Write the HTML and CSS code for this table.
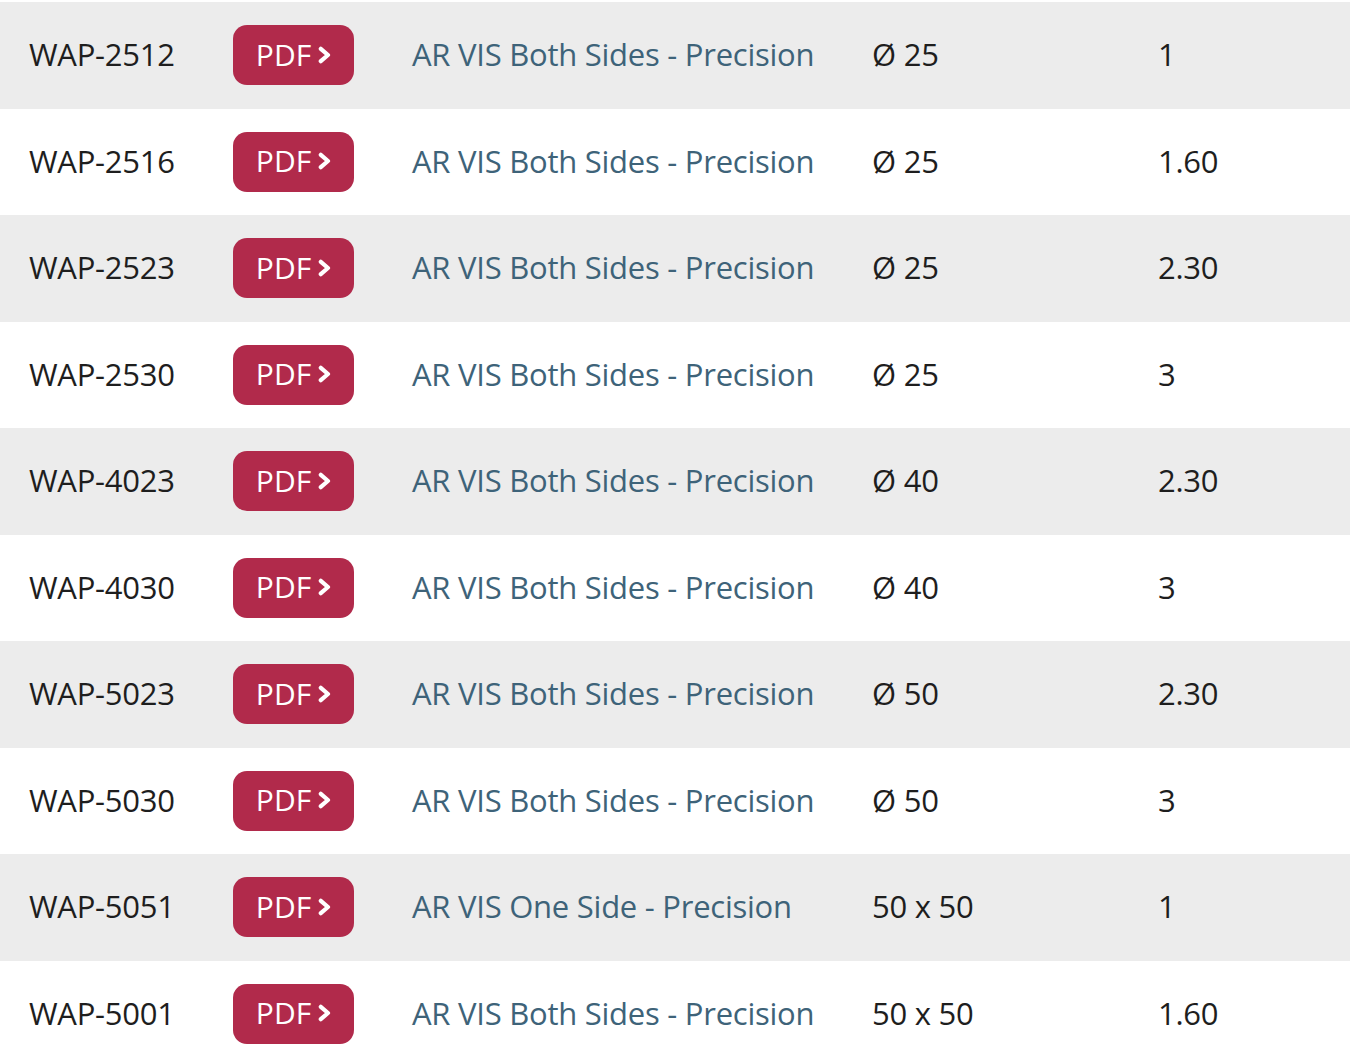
FILE: index.html
```html
<!DOCTYPE html>
<html>
<head>
<meta charset="utf-8">
<link rel="stylesheet" href="styles.css">
</head>
<body>
<div class="table">
  <div class="row alt"><span class="code">WAP-2512</span><span class="cell"><a class="pdf">PDF<svg class="chev" viewBox="0 0 13 18"><path d="M2.8 2.8 L10 9 L2.8 15.2"/></svg></a></span><span class="desc">AR VIS Both Sides - Precision</span><span class="size">Ø 25</span><span class="val">1</span></div>
  <div class="row"><span class="code">WAP-2516</span><span class="cell"><a class="pdf">PDF<svg class="chev" viewBox="0 0 13 18"><path d="M2.8 2.8 L10 9 L2.8 15.2"/></svg></a></span><span class="desc">AR VIS Both Sides - Precision</span><span class="size">Ø 25</span><span class="val">1.60</span></div>
  <div class="row alt"><span class="code">WAP-2523</span><span class="cell"><a class="pdf">PDF<svg class="chev" viewBox="0 0 13 18"><path d="M2.8 2.8 L10 9 L2.8 15.2"/></svg></a></span><span class="desc">AR VIS Both Sides - Precision</span><span class="size">Ø 25</span><span class="val">2.30</span></div>
  <div class="row"><span class="code">WAP-2530</span><span class="cell"><a class="pdf">PDF<svg class="chev" viewBox="0 0 13 18"><path d="M2.8 2.8 L10 9 L2.8 15.2"/></svg></a></span><span class="desc">AR VIS Both Sides - Precision</span><span class="size">Ø 25</span><span class="val">3</span></div>
  <div class="row alt"><span class="code">WAP-4023</span><span class="cell"><a class="pdf">PDF<svg class="chev" viewBox="0 0 13 18"><path d="M2.8 2.8 L10 9 L2.8 15.2"/></svg></a></span><span class="desc">AR VIS Both Sides - Precision</span><span class="size">Ø 40</span><span class="val">2.30</span></div>
  <div class="row"><span class="code">WAP-4030</span><span class="cell"><a class="pdf">PDF<svg class="chev" viewBox="0 0 13 18"><path d="M2.8 2.8 L10 9 L2.8 15.2"/></svg></a></span><span class="desc">AR VIS Both Sides - Precision</span><span class="size">Ø 40</span><span class="val">3</span></div>
  <div class="row alt"><span class="code">WAP-5023</span><span class="cell"><a class="pdf">PDF<svg class="chev" viewBox="0 0 13 18"><path d="M2.8 2.8 L10 9 L2.8 15.2"/></svg></a></span><span class="desc">AR VIS Both Sides - Precision</span><span class="size">Ø 50</span><span class="val">2.30</span></div>
  <div class="row"><span class="code">WAP-5030</span><span class="cell"><a class="pdf">PDF<svg class="chev" viewBox="0 0 13 18"><path d="M2.8 2.8 L10 9 L2.8 15.2"/></svg></a></span><span class="desc">AR VIS Both Sides - Precision</span><span class="size">Ø 50</span><span class="val">3</span></div>
  <div class="row alt"><span class="code">WAP-5051</span><span class="cell"><a class="pdf">PDF<svg class="chev" viewBox="0 0 13 18"><path d="M2.8 2.8 L10 9 L2.8 15.2"/></svg></a></span><span class="desc">AR VIS One Side - Precision</span><span class="size">50 x 50</span><span class="val">1</span></div>
  <div class="row"><span class="code">WAP-5001</span><span class="cell"><a class="pdf">PDF<svg class="chev" viewBox="0 0 13 18"><path d="M2.8 2.8 L10 9 L2.8 15.2"/></svg></a></span><span class="desc">AR VIS Both Sides - Precision</span><span class="size">50 x 50</span><span class="val">1.60</span></div>
</div>
</body>
</html>
```
FILE: styles.css
```css
html, body {
  margin: 0;
  padding: 0;
  background: #fff;
}
body {
  font-family: "Open Sans", "Noto Sans", sans-serif;
  font-size: 31px;
  letter-spacing: -0.25px;
  color: #1e1e1e;
  padding-top: 2px;
  overflow: hidden;
}
.table {
  display: flex;
  flex-direction: column;
}
.row {
  display: grid;
  grid-template-columns: 204px 179px 460px 286px 1fr;
  align-items: center;
  height: 106.5px;
  padding-left: 29px;
  padding-bottom: 2px;
  box-sizing: border-box;
}
.row.alt {
  background: #ececec;
}
.cell {
  display: flex;
  align-items: center;
  margin-bottom: -2px;
}
.pdf {
  display: inline-flex;
  align-items: center;
  justify-content: center;
  gap: 7px;
  width: 121px;
  height: 60px;
  padding-bottom: 2px;
  border-radius: 14px;
  background: #b12a4b;
  color: #fff;
  font-size: 30px;
  letter-spacing: 0;
  box-sizing: border-box;
}
.chev {
  width: 13px;
  height: 18px;
  margin-top: 1px;
  fill: none;
  stroke: #fff;
  stroke-width: 4.2;
  stroke-linecap: round;
  stroke-linejoin: round;
}
.desc {
  color: #3e6379;
}
```
